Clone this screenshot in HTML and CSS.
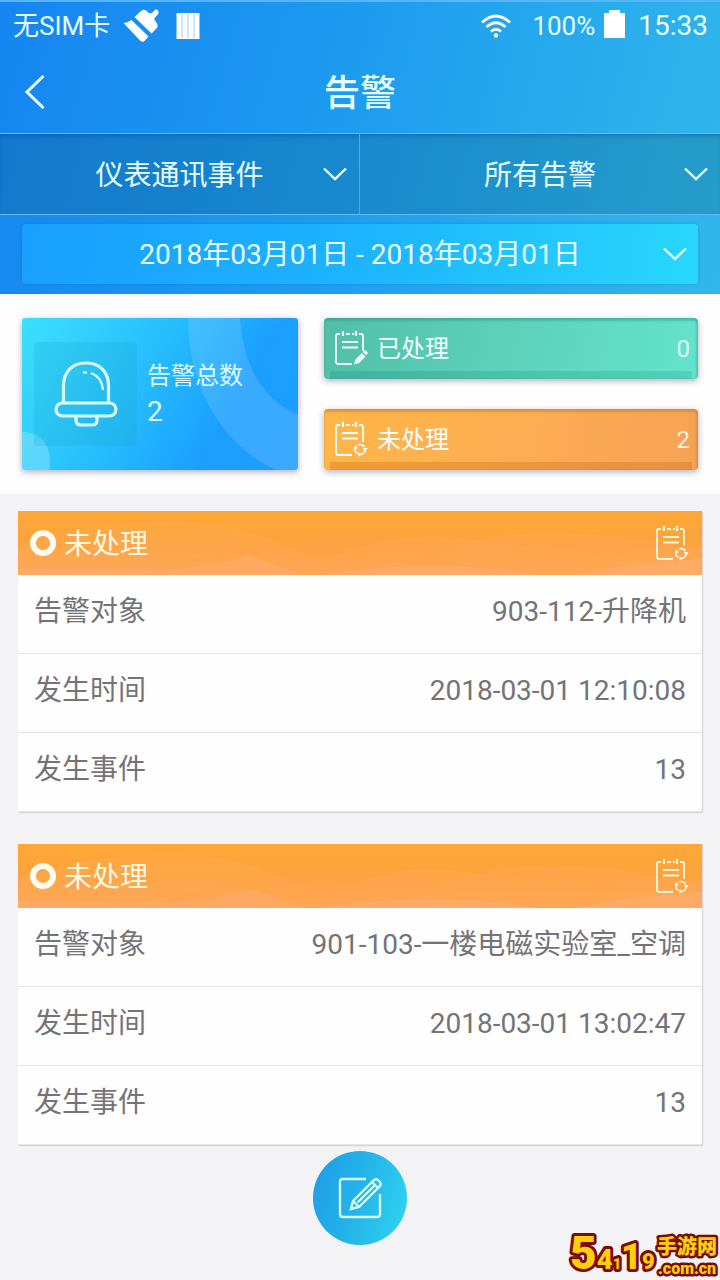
FILE: index.html
```html
<!DOCTYPE html>
<html lang="zh-CN">
<head>
<meta charset="utf-8">
<meta name="viewport" content="width=device-width, initial-scale=1">
<title>告警</title>
<link rel="stylesheet" href="styles.css">
</head>
<body>
<svg class="defs" aria-hidden="true">
  <symbol id="chevron" viewBox="0 0 24 14"><path d="M1 1.5 12 12 23 1.5" fill="none" stroke="currentColor" stroke-width="2.4"/></symbol>
  <symbol id="note" viewBox="0 0 34 36">
    <g fill="none" stroke="currentColor" stroke-width="1.800">
      <path d="M6 4H3.500Q2 4 2 6V31.500Q2 34 4.500 34H18M12 4H16M18 4H20M25 4H27Q29 4 29 6V21"/>
      <path d="M9 1V6M22 1V6" stroke-width="2.200"/>
      <path d="M8 12H24M8 17.500H24" stroke-width="2"/>
    </g>
  </symbol>
  <symbol id="note-done" viewBox="0 0 34 36">
    <use href="#note"/>
    <path d="M20 34.500 21.500 29.500 28 23 31.500 26.500 25 33ZM29 22 30.500 20.500Q31.500 20 32.500 21L33.500 22Q34 23 33.500 23.800L32.300 25.300Z" fill="currentColor"/>
  </symbol>
  <symbol id="note-open" viewBox="0 0 34 36">
    <use href="#note"/>
    <circle cx="26" cy="28.500" r="5" fill="none" stroke="currentColor" stroke-width="1.600" stroke-dasharray="7.200 3.270"/>
    <path d="M28.500 27H33.500L31.500 30.500ZM19.500 27.500 21.500 24 24 27.500ZM24.500 31 27.500 33.500 24.500 35.800Z" fill="currentColor"/>
  </symbol>
  <symbol id="waves" viewBox="0 0 684 64" preserveAspectRatio="none">
    <path d="M0 34Q90 8 160 10T300 50Q380 20 430 26T590 44Q640 36 684 36V64H0Z" fill="#ffae62" fill-opacity=".25"/>
    <path d="M190 44Q270 24 350 27T420 48L500 64H120Z" fill="#ffa24a" fill-opacity=".4"/>
    <path d="M0 57Q70 60 130 59T230 44L285 64H0Z" fill="#ffb07a" fill-opacity=".4"/>
    <path d="M410 50Q450 22 530 22T684 40V64H500Q440 64 410 50Z" fill="#ffa64e" fill-opacity=".55"/>
    <path d="M300 64Q420 46 520 64ZM560 64Q610 52 684 48V64Z" fill="#ffb07a" fill-opacity=".5"/>
  </symbol>
</svg>

<main class="screen">
  <header class="header">
    <div class="status">
      <span class="status-text">无SIM卡</span>
      <svg class="brush" viewBox="0 0 36 34" aria-hidden="true"><path d="M11.500 8 18 2Q20 0 23 1.500L26 4Q28 5 30 3L32 .800Q34 0 35 1.500 36.500 4 34 6.500L31.500 9Q31 11 33 13 35 15 34.500 18L32 21 28.500 24.500ZM.500 14 4 13.500 8.500 11 25.500 27.500 22 31.500Q19.500 34 17 31.500Z" fill="#fff"/></svg>
      <svg class="bars" viewBox="0 0 24 26" aria-hidden="true"><path d="M.500 0H23.500V26H.500Z" fill="#fff"/><path d="M6 1V25M12 1V25M18 1V25" stroke="#9accf7" stroke-width="1"/></svg>
      <svg class="wifi" viewBox="0 0 30 24" aria-hidden="true"><g fill="none" stroke="#fff" stroke-width="2.800"><path d="M1 8.500Q15-4.500 29 8.500M5.500 13Q15 4.500 24.500 13M10 17.500Q15 13 20 17.500"/></g><circle cx="15" cy="21.500" r="2.200" fill="#fff"/></svg>
      <span class="status-text">100%</span>
      <svg class="battery" viewBox="0 0 21 28" aria-hidden="true"><path d="M5 0H16V3H21V28H0V3H5Z" fill="#fff"/></svg>
      <time class="clock">15:33</time>
    </div>
    <div class="titlebar">
      <button class="back" aria-label="返回"><svg viewBox="0 0 20 34" aria-hidden="true"><path d="M18.500 1 2 17 18.500 33" fill="none" stroke="currentColor" stroke-width="3"/></svg></button>
      <h1 class="title">告警</h1>
    </div>
    <div class="filters">
      <div class="filter">
        <select class="filter-select" aria-label="事件类型"><option>仪表通讯事件</option></select>
        <svg class="chevron" aria-hidden="true"><use href="#chevron"/></svg>
      </div>
      <div class="filter">
        <select class="filter-select" aria-label="告警状态"><option>所有告警</option></select>
        <svg class="chevron" aria-hidden="true"><use href="#chevron"/></svg>
      </div>
    </div>
    <div class="dates">
      <button class="date-range">
        <span class="date-text">2018年03月01日 - 2018年03月01日</span>
        <svg class="chevron" aria-hidden="true"><use href="#chevron"/></svg>
      </button>
    </div>
  </header>

  <section class="summary">
    <div class="total">
      <svg class="total-art" viewBox="0 0 276 152" preserveAspectRatio="none" aria-hidden="true">
        <path d="M166 0H218C221 45 238 80 276 97V152H254C205 130 166 75 166 0Z" fill="#fff" fill-opacity=".13"/>
        <path d="M0 114Q24 114 28 139V152H0Z" fill="#fff" fill-opacity=".22"/>
      </svg>
      <div class="bell">
        <svg viewBox="0 0 64 66" aria-hidden="true"><g fill="none" stroke="#d9fdff" stroke-width="3.200"><path d="M9.500 41V25C9.500 10 19 2 32 2S54.500 10 54.500 25V41"/><rect x="2" y="42" width="60" height="13" rx="6.500"/><path d="M22 56V59Q22 64 27 64H38Q43 64 43 59V56"/></g><path d="M37 12Q48 16 49 29" fill="none" stroke="#d9fdff" stroke-width="2.200"/><path d="M29 11.500H33" stroke="#d9fdff" stroke-width="2"/></svg>
      </div>
      <div class="total-copy"><span class="total-label">告警总数</span><strong class="total-value">2</strong></div>
    </div>
    <div class="stats">
      <div class="stat stat-done"><svg class="note" aria-hidden="true"><use href="#note-done"/></svg><span>已处理</span><span class="count">0</span></div>
      <div class="stat stat-open"><svg class="note" aria-hidden="true"><use href="#note-open"/></svg><span>未处理</span><span class="count">2</span></div>
    </div>
  </section>

  <section class="alarms">
    <article class="card">
      <header class="card-head">
        <svg class="waves" aria-hidden="true"><use href="#waves"/></svg>
        <span class="ring"></span><h2 class="card-title">未处理</h2>
        <svg class="note" aria-hidden="true"><use href="#note-open"/></svg>
      </header>
      <dl class="rows">
        <div class="row"><dt>告警对象</dt><dd>903-112-升降机</dd></div>
        <div class="row"><dt>发生时间</dt><dd>2018-03-01 12:10:08</dd></div>
        <div class="row"><dt>发生事件</dt><dd>13</dd></div>
      </dl>
    </article>
    <article class="card">
      <header class="card-head">
        <svg class="waves" aria-hidden="true"><use href="#waves"/></svg>
        <span class="ring"></span><h2 class="card-title">未处理</h2>
        <svg class="note" aria-hidden="true"><use href="#note-open"/></svg>
      </header>
      <dl class="rows">
        <div class="row"><dt>告警对象</dt><dd>901-103-一楼电磁实验室_空调</dd></div>
        <div class="row"><dt>发生时间</dt><dd>2018-03-01 13:02:47</dd></div>
        <div class="row"><dt>发生事件</dt><dd>13</dd></div>
      </dl>
    </article>
  </section>

  <div class="actions">
    <button class="edit" aria-label="编辑"><svg viewBox="0 0 44 42" aria-hidden="true"><g fill="none" stroke="#d5fbff" stroke-width="2.400"><path d="M28 2H5Q2 2 2 5V37Q2 40 5 40H39Q42 40 42 37V17"/><path d="M13 32 15 24 35.500 3.500Q38 1 40.500 3.500L41.500 4.500Q44 7 41.500 9.500L21 30ZM15 24 21 30M34 5 40 11M19.500 25.500 36 9"/></g></svg></button>
  </div>

  <svg class="brand" viewBox="0 0 152 54" role="img" aria-label="5419手游网 .com.cn">
    <g class="brand-text">
      <text class="brand-number" x="2" y="43"><tspan class="brand-5">5</tspan><tspan class="brand-4">4</tspan><tspan class="brand-slash">1</tspan><tspan class="brand-1">1</tspan><tspan class="brand-9">9</tspan></text>
      <text class="brand-cn" x="89" y="28">手游网</text>
      <text class="brand-domain" x="90" y="48">.com.cn</text>
    </g>
  </svg>
</main>
</body>
</html>
```
FILE: styles.css
```css
* { box-sizing: border-box; }
body {
  margin: 0;
  background: #f3f2f4;
  color: #757377;
  font-family: Roboto, "Noto Sans CJK SC", sans-serif;
  font-size: 28px;
  line-height: 40px;
}
button, select {
  margin: 0;
  padding: 0;
  border: 0;
  background: none;
  color: inherit;
  font: inherit;
}
h1, h2, dl, dd { margin: 0; font-weight: 400; }
svg { display: block; flex: none; }
.defs { position: absolute; width: 0; height: 0; }
.screen { position: relative; min-height: 100vh; display: flex; flex-direction: column; }

.header {
  color: #e6fdff;
  background: linear-gradient(105deg, #1685f1 0%, #1b98f0 40%, #24a6ee 65%, #31b8ea 100%);
  border-top: 2px solid #56b5f7;
}
.status { display: flex; align-items: center; height: 48px; padding: 0 12px 0 13px; }
.status-text { font-size: 26px; }
.brush { width: 36px; height: 34px; margin-left: 13px; }
.bars { width: 24px; height: 26px; margin-left: 17px; }
.wifi { width: 30px; height: 24px; margin: 0 21px 0 auto; }
.battery { width: 21px; height: 28px; margin: 0 13px 4px 9px; }
.titlebar {
  display: grid;
  grid-template-columns: 60px 1fr 60px;
  align-items: center;
  height: 83px;
}
.back { display: flex; align-items: center; height: 60px; padding-left: 25px; }
.back svg { width: 20px; height: 34px; }
.title { padding-top: 4px; text-align: center; font-size: 36px; line-height: 52px; font-weight: 500; }
.filters {
  display: grid;
  grid-template-columns: 1fr 1fr;
  border: solid #64b9ef;
  border-width: 1px 0;
  background: rgba(10, 75, 100, .24);
  box-shadow: inset 0 4px 4px -2px rgba(0, 50, 110, .3);
}
.filter { position: relative; display: flex; align-items: center; height: 80px; }
.filter:first-child { border-right: 1px solid #55a8dc; }
.filter-select {
  appearance: none;
  width: 100%;
  height: 80px;
  padding-top: 4px;
  text-align: center;
  text-align-last: center;
}
.chevron { width: 24px; height: 14px; pointer-events: none; }
.filter .chevron { position: absolute; right: 12px; }
.dates { padding: 9px 22px 10px; }
.date-range {
  position: relative;
  display: flex;
  align-items: center;
  justify-content: center;
  width: 100%;
  height: 60px;
  border-radius: 4px;
  background: linear-gradient(100deg, #199fff, #1db4fe 50%, #28d8fb);
  box-shadow: 0 0 3px rgba(0, 90, 190, .35);
}
.date-text { padding-top: 2px; }
.date-range .chevron { position: absolute; right: 11px; }

.summary {
  display: grid;
  grid-template-columns: 276fr 374fr;
  gap: 26px;
  padding: 24px 22px;
  background: #fefefe;
  font-size: 24px;
  line-height: 36px;
}
.total {
  position: relative;
  display: flex;
  align-items: center;
  gap: 10px;
  height: 152px;
  padding-left: 12px;
  border-radius: 3px;
  overflow: hidden;
  color: #dffcff;
  background: linear-gradient(120deg, #3ce0fd 0%, #27bffd 40%, #1b9fff 72%, #1e9dff 100%);
  box-shadow: 0 2px 6px rgba(60, 50, 100, .4);
}
.total-art { position: absolute; inset: 0; width: 100%; height: 100%; }
.bell {
  position: relative;
  display: grid;
  place-items: center;
  flex: none;
  width: 103px;
  height: 104px;
  border-radius: 4px;
  background: rgba(30, 160, 190, .2);
}
.bell svg { width: 64px; height: 66px; }
.total-copy { position: relative; display: flex; flex-direction: column; }
.total-value { font-size: 28px; font-weight: 400; }
.stats { display: flex; flex-direction: column; justify-content: space-between; }
.stat {
  display: flex;
  align-items: center;
  gap: 9px;
  height: 61px;
  padding: 0 8px 0 10px;
  border-radius: 4px;
  color: #f4ffff;
}
.stat-done {
  background: linear-gradient(90deg, rgba(40, 155, 140, .4), rgba(50, 175, 155, .35)) 50% 100% / calc(100% - 12px) 8px no-repeat, linear-gradient(100deg, #51bfa7, #5cd0b9 45%, #63e3cd);
  box-shadow: inset 0 3px 2px rgba(40, 150, 130, .45), inset -2px 0 2px rgba(40, 150, 130, .3), 0 2px 6px rgba(60, 60, 90, .4);
}
.stat-open {
  background: linear-gradient(90deg, rgba(224, 130, 30, .5), rgba(215, 125, 45, .5)) 50% 100% / calc(100% - 12px) 8px no-repeat, linear-gradient(100deg, #ffb648, #feaf52 45%, #f6a255);
  box-shadow: inset 0 3px 2px rgba(205, 120, 40, .5), inset -2px 0 2px rgba(205, 120, 40, .4), 0 2px 6px rgba(60, 60, 90, .4);
}
.note { width: 34px; height: 36px; }
.stat .note { margin-bottom: 2px; }
.count { margin-left: auto; opacity: .85; }

.alarms { display: grid; gap: 32px; padding: 17px 18px 0; }
.card { background: #fefefe; box-shadow: 1px 1px 1px #d4d3d6; }
.card-head {
  position: relative;
  display: flex;
  align-items: center;
  height: 64px;
  padding: 0 13px 0 12px;
  color: #fff9e2;
  background: linear-gradient(#ffa736, #fca33d 50%, #fda65a);
}
.waves { position: absolute; inset: 0; width: 100%; height: 100%; }
.ring {
  position: relative;
  width: 26px;
  height: 26px;
  margin-right: 8px;
  border: 6px solid #fffbee;
  border-radius: 50%;
}
.card-title { position: relative; padding-top: 4px; font-size: 28px; }
.card-head .note { position: relative; margin-left: auto; }
.row {
  display: flex;
  justify-content: space-between;
  gap: 16px;
  padding: 17px 16px 21px;
  border-bottom: 1px solid #e6e5e8;
}
.row dd { text-align: right; }

.actions { display: flex; justify-content: center; padding: 6px 0 35px; }
.edit {
  display: grid;
  place-items: center;
  width: 94px;
  height: 94px;
  border-radius: 50%;
  background: linear-gradient(105deg, #1e9be6, #24b5e9 50%, #30d6f0);
}
.edit svg { width: 44px; height: 42px; }

.brand { position: absolute; right: 0; bottom: 0; width: 152px; height: 54px; }
.brand-text {
  fill: #ffcf0b;
  stroke: #7a0d08;
  stroke-width: 6px;
  stroke-linejoin: round;
  paint-order: stroke;
  font-family: Roboto, "Noto Sans CJK SC", sans-serif;
  font-weight: 900;
}
.brand-5 { font-size: 46px; }
.brand-4 { font-size: 28px; }
.brand-slash { font-size: 14px; }
.brand-1 { font-size: 36px; }
.brand-9 { font-size: 22px; }
.brand-cn { font-size: 20px; stroke-width: 5px; }
.brand-domain { font-size: 16px; stroke-width: 5px; }
```
